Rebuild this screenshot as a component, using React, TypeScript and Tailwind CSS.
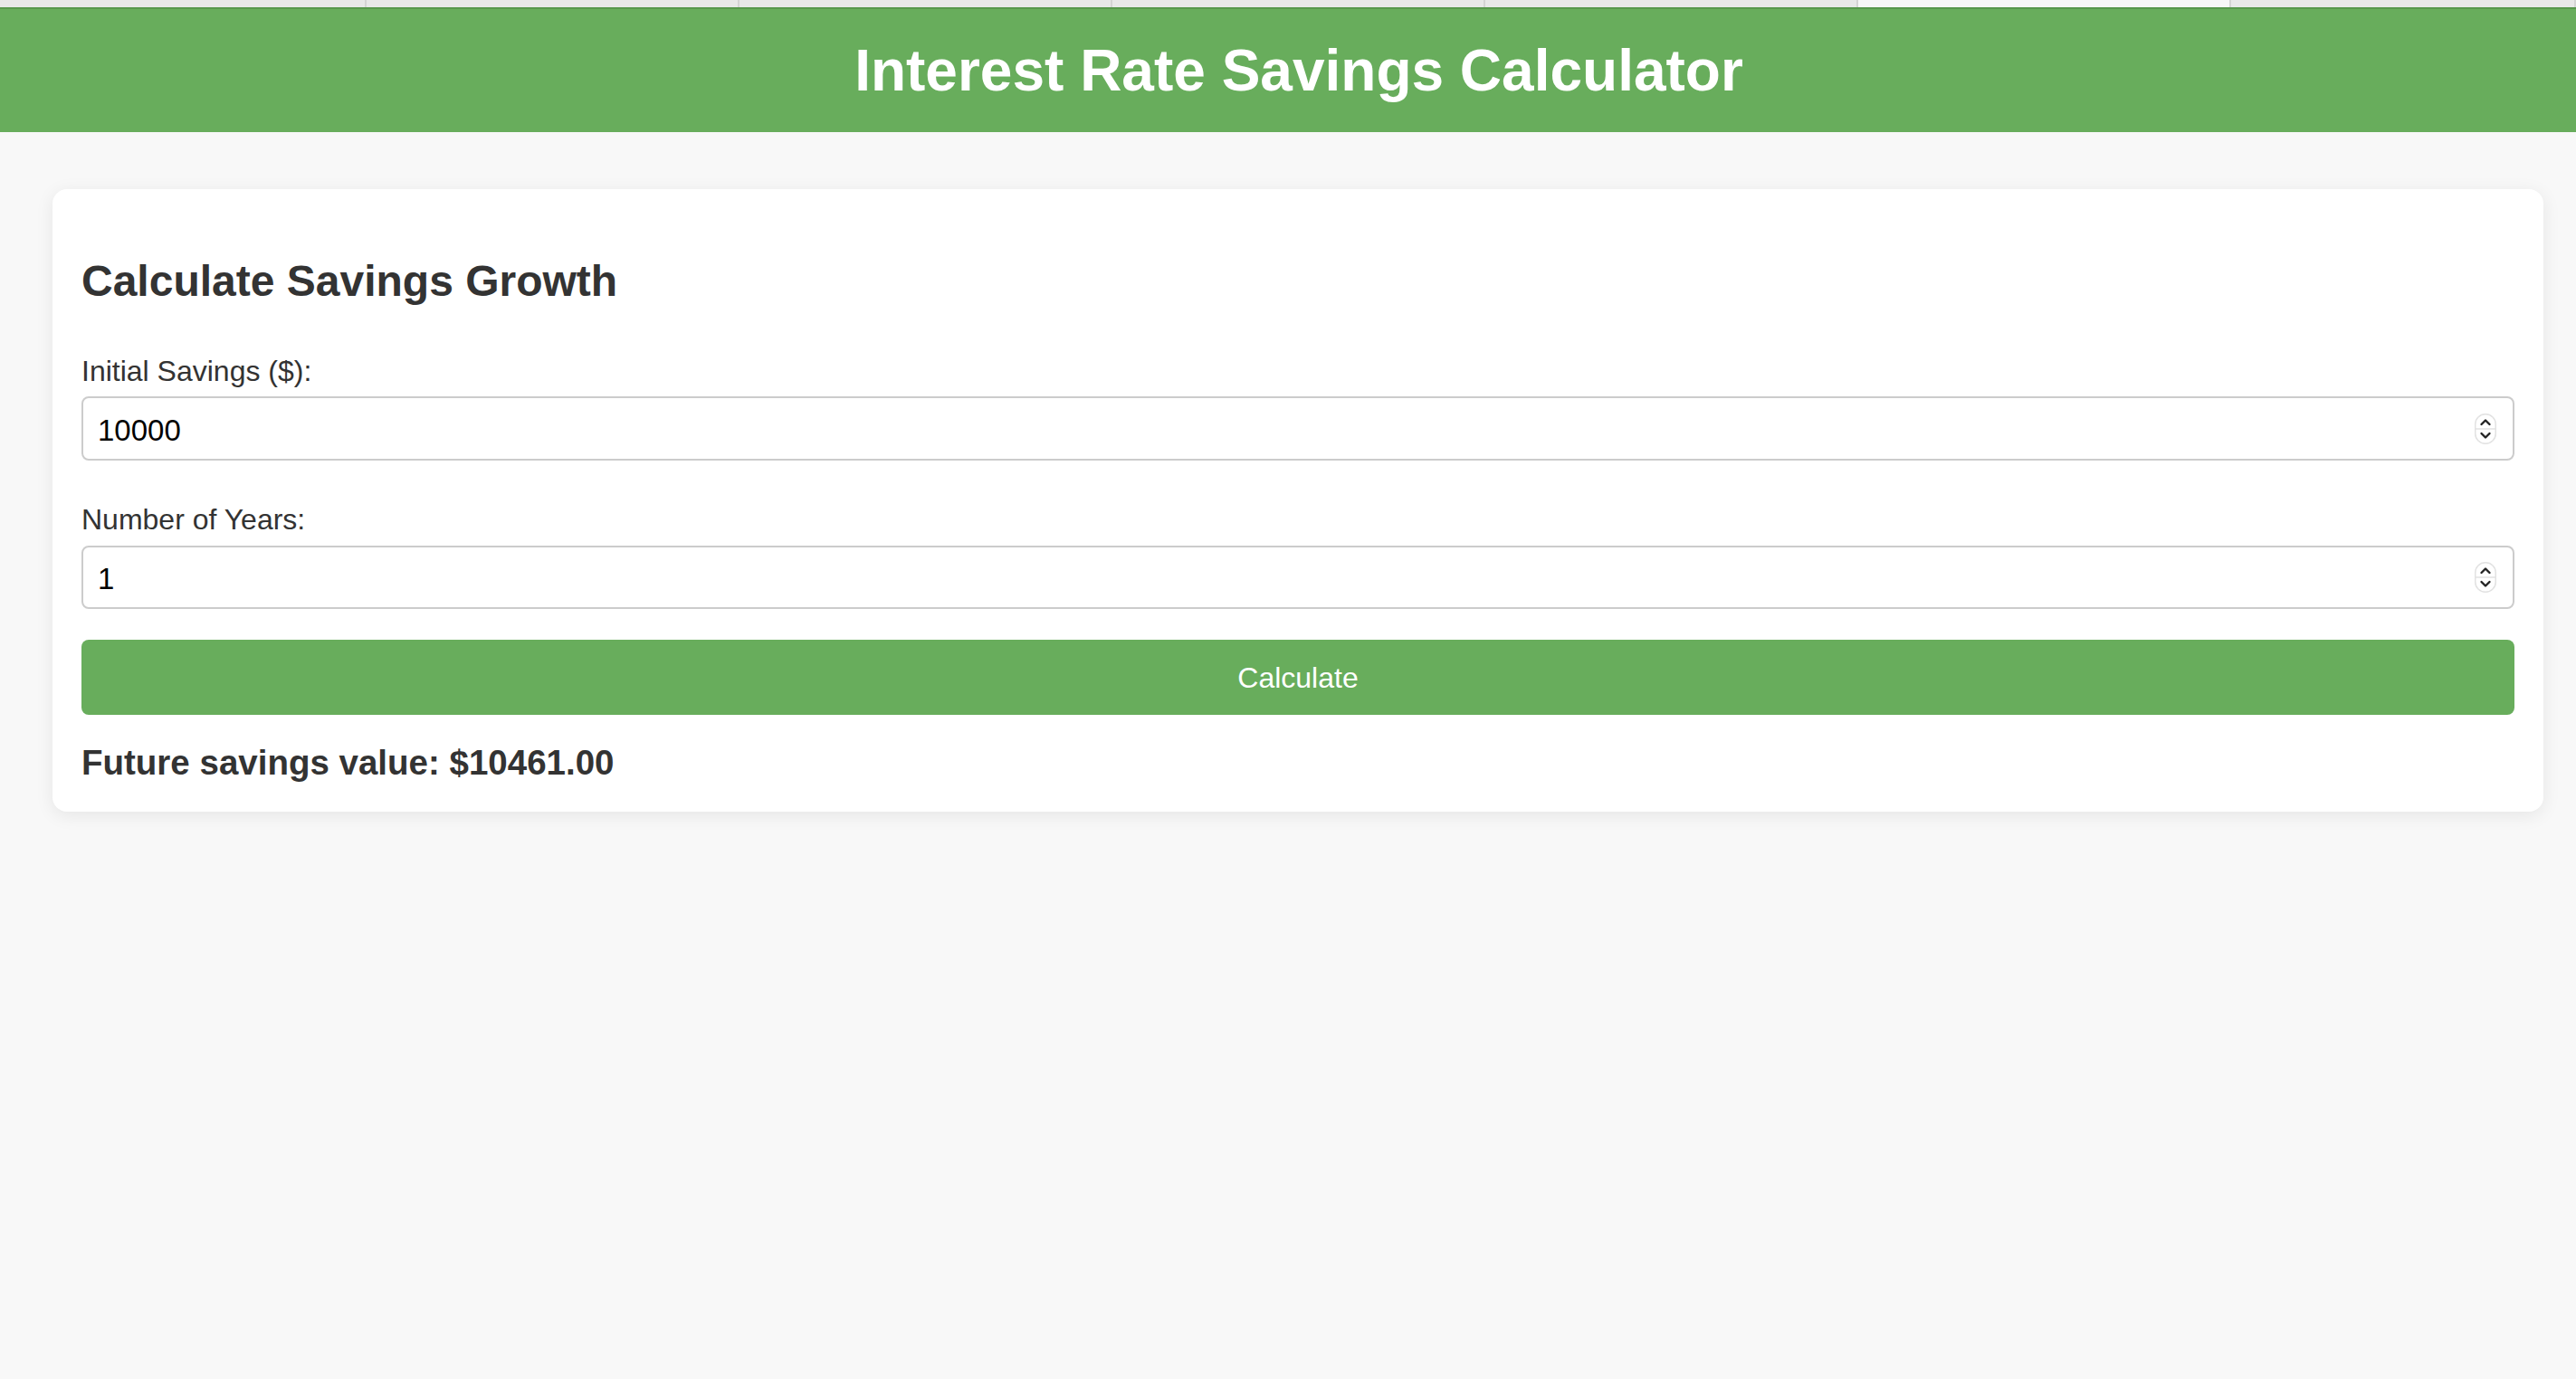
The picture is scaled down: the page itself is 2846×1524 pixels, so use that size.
import { useState } from "react";

const tabs = [405, 412, 412, 412, 412, 412, 381]

function Spinner() {
    return (
        <svg width="24" height="34" viewBox="0 0 24 34" className="absolute right-[20px] top-1/2 -translate-y-1/2">
            <rect x="0.75" y="0.75" width="22.5" height="32.5" rx="11" fill="#fff" stroke="#e2e2e2" strokeWidth="1.5" />
            <line x1="1" y1="17" x2="23" y2="17" stroke="#e2e2e2" strokeWidth="1.5" />
            <path d="M7.5 12 L12 7.5 L16.5 12" fill="none" stroke="#222" strokeWidth="2.4" strokeLinecap="round" strokeLinejoin="round" />
            <path d="M7.5 22 L12 26.5 L16.5 22" fill="none" stroke="#222" strokeWidth="2.4" strokeLinecap="round" strokeLinejoin="round" />
        </svg>
    )
}

export default function App() {

    const [savings, setSavings] = useState("10000")
    const [years, setYears] = useState("1")
    const [result, setResult] = useState("10461.00")

    // taxa fixa usada pela calculadora
    const calcular = () => {
        const valor = parseFloat(savings) || 0
        const anos = parseFloat(years) || 0
        setResult((valor * Math.pow(1.0461, anos)).toFixed(2))
    }

    return (
        <div className="min-h-screen w-[2846px] bg-[#f8f8f8] font-['Liberation_Sans',Arial,sans-serif]">
            <div className="flex h-[8px] bg-[#e8e8e8]">
                {tabs.map((w, i) => (
                    <div key={i} style={{ width: w }} className={`h-full border-r-2 border-[#d4d4d4] ${i === 5 ? "bg-[#f7f7f7]" : ""}`} />
                ))}
            </div>
            <header className="bg-[#68ad5c] border-t-2 border-[#57974c] pl-[24px] py-[31px] text-center">
                <h1 className="text-[64px] leading-[74px] font-bold text-white">Interest Rate Savings Calculator</h1>
            </header>

            <main className="ml-[58px] w-[2752px] mt-[63px]">
                <div className="bg-white rounded-[16px] shadow-[0_4px_20px_rgba(0,0,0,0.08)] px-[32px] pt-[32px] pb-[32px]">
                    <h2 className="mt-[42px] mb-[54px] text-[48px] leading-[55px] font-bold text-[#333]">Calculate Savings Growth</h2>

                    <label className="block mb-[9px] text-[32px] leading-[37px] text-[#333]">Initial Savings ($):</label>
                    <div className="relative">
                        <input
                            type="text"
                            value={savings}
                            onChange={(e) => setSavings(e.target.value)}
                            className="block w-full h-[71px] border-2 border-[#cccccc] rounded-[8px] pl-[16px] pt-[4px] text-[33px] text-black outline-none"
                        />
                        <Spinner />
                    </div>

                    <label className="block mt-[47px] mb-[10px] text-[32px] leading-[37px] text-[#333]">Number of Years:</label>
                    <div className="relative">
                        <input
                            type="text"
                            value={years}
                            onChange={(e) => setYears(e.target.value)}
                            className="block w-full h-[70px] border-2 border-[#cccccc] rounded-[8px] pl-[16px] pt-[4px] text-[33px] text-black outline-none"
                        />
                        <Spinner />
                    </div>

                    <button
                        type="button"
                        onClick={() => calcular()}
                        className="block w-full h-[83px] mt-[34px] bg-[#68ad5c] hover:bg-[#5c9c51] rounded-[8px] text-white text-[32px] cursor-pointer"
                    >
                        Calculate
                    </button>

                    <h3 className="mt-[31px] text-[38.5px] leading-[44px] font-bold text-[#333]">Future savings value: ${result}</h3>
                </div>
            </main>
        </div>
    )
}
